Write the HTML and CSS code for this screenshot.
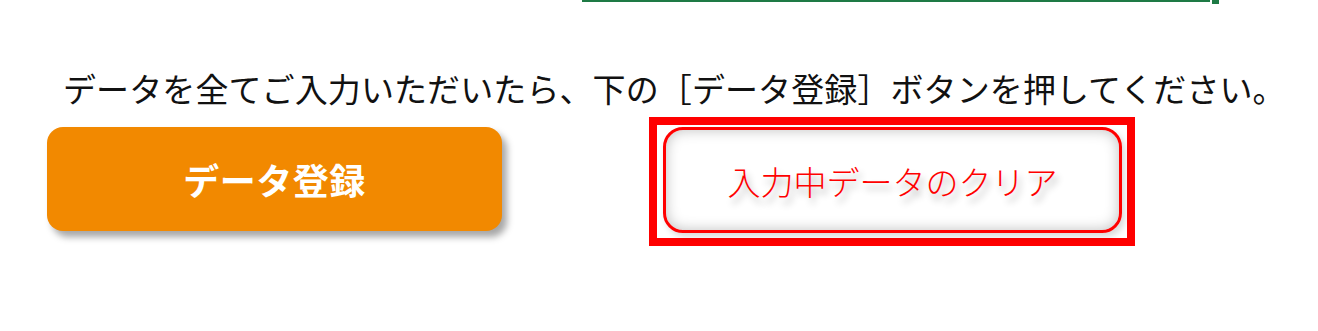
FILE: index.html
```html
<!DOCTYPE html>
<html lang="ja">
<head>
<meta charset="utf-8">
<link rel="stylesheet" href="styles.css">
</head>
<body>
<div class="topline"><div class="bar"></div><div class="knob"></div></div>
<p class="note">データを全てご入力いただいたら、下の［データ登録］ボタンを押してください。</p>
<div class="actions">
  <div class="btn-register">データ登録</div>
  <div class="highlight">
    <div class="btn-clear"><span>入力中データのクリア</span></div>
  </div>
</div>
</body>
</html>
```
FILE: styles.css
```css
html, body {
  margin: 0;
  padding: 0;
  background: #fff;
  width: 1318px;
  height: 331px;
  overflow: hidden;
  font-family: "Noto Sans CJK JP", "Noto Sans", sans-serif;
}
.topline {
  display: flex;
  align-items: flex-start;
  margin-left: 582px;
  height: 4px;
}
.bar {
  width: 628px;
  height: 2px;
  background: #1e7a45;
}
.knob {
  width: 7px;
  height: 4px;
  margin-left: 2px;
  background: #1e7a45;
}
.note {
  margin: 0;
  margin-top: 64px;
  padding-left: 63px;
  font-size: 33px;
  line-height: 40px;
  color: #111;
  white-space: nowrap;
  letter-spacing: 0.1px;
}
.actions {
  display: flex;
  align-items: flex-start;
  margin-top: 9px;
  padding-left: 47px;
}
.btn-register {
  margin-top: 10px;
  width: 455px;
  height: 104px;
  border-radius: 16px;
  background: #f28900;
  box-shadow: 5px 6px 7px rgba(0, 0, 0, 0.35);
  color: #fff;
  font-weight: 700;
  font-size: 36px;
  display: flex;
  align-items: center;
  justify-content: center;
  letter-spacing: 0.5px;
}
.highlight {
  margin-left: 147px;
  border: 8px solid #ff0000;
  padding: 2px 5px 5px 6px;
  background: #fff;
}
.btn-clear {
  box-sizing: border-box;
  width: 459px;
  height: 106px;
  border: 3px solid #ff0000;
  border-radius: 20px;
  box-shadow: inset 0 0 14px rgba(0, 0, 0, 0.25), 3px 4px 6px rgba(0, 0, 0, 0.15);
  display: flex;
  align-items: center;
  justify-content: center;
  color: #ff0000;
  font-size: 33px;
  font-weight: 300;
  text-shadow: 3px 6px 7px rgba(0, 0, 0, 0.3);
}
.btn-clear span {
  margin-top: 2px;
}
```
